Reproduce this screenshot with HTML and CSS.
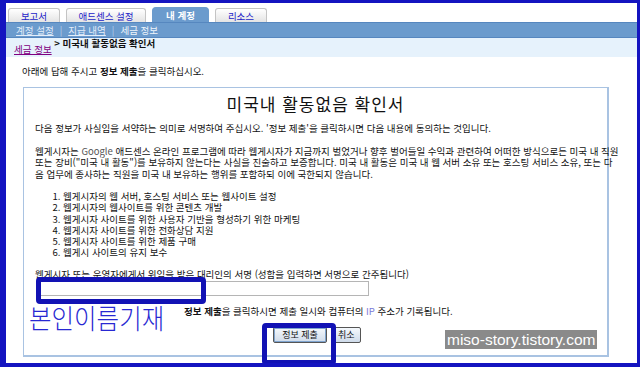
FILE: index.html
```html
<!DOCTYPE html>
<html lang="ko">
<head>
    <meta charset="UTF-8">
    <title>미국내 활동없음 확인서</title>
    <link rel="stylesheet" href="styles.css">
</head>
<body>
<div class="frame">
    <div class="tabs">
        <a class="tab tab-report" href="#">보고서</a>
        <a class="tab tab-setting" href="#">애드센스 설정</a>
        <a class="tab tab-active" href="#">내 계정</a>
        <a class="tab tab-resource" href="#">리소스</a>
    </div>
    <div class="subnav">
        <a href="#">계정 설정</a><span class="sep">|</span><a href="#">지급 내역</a><span class="sep">|</span><span class="current">세금 정보</span>
    </div>
    <div class="crumb">
        <a href="#">세금 정보</a> &gt; 미국내 활동없음 확인서
    </div>
    <p class="intro">아래에 답해 주시고 <b>정보 제출</b>을 클릭하십시오.</p>

    <div class="panel">
        <h1>미국내 활동없음 확인서</h1>
        <p>다음 정보가 사실임을 서약하는 의미로 서명하여 주십시오. '정보 제출'을 클릭하시면 다음 내용에 동의하는 것입니다.</p>
        <p>웹게시자는 <span class="google">Google</span> 애드센스 온라인 프로그램에 따라 웹게시자가 지금까지 벌었거나 향후 벌어들일 수익과 관련하여 어떠한 방식으로든 미국 내 직원<br>또는 장비("미국 내 활동")를 보유하지 않는다는 사실을 진술하고 보증합니다. 미국 내 활동은 미국 내 웹 서버 소유 또는 호스팅 서비스 소유, 또는 다<br>음 업무에 종사하는 직원을 미국 내 보유하는 행위를 포함하되 이에 국한되지 않습니다.</p>
        <ol>
            <li>웹게시자의 웹 서버, 호스팅 서비스 또는 웹사이트 설정</li>
            <li>웹게시자의 웹사이트를 위한 콘텐츠 개발</li>
            <li>웹게시자 사이트를 위한 사용자 기반을 형성하기 위한 마케팅</li>
            <li>웹게시자 사이트를 위한 전화상담 지원</li>
            <li>웹게시자 사이트를 위한 제품 구매</li>
            <li>웹게시 사이트의 유지 보수</li>
        </ol>
        <label class="sign-label" for="sign">웹게시자 또는 운영자에게서 위임을 받은 대리인의 서명 (성함을 입력하면 서명으로 간주됩니다)</label>
        <input class="sign-input" type="text" id="sign">
        <p class="note"><b>정보 제출</b>을 클릭하시면 제출 일시와 컴퓨터의 <span class="ip">IP</span> 주소가 기록됩니다.</p>
        <div class="buttons">
            <button class="btn btn-submit">정보 제출</button>
            <button class="btn">취소</button>
        </div>
    </div>

    <div class="mark mark-name"></div>
    <div class="mark-text">본인이름기재</div>
    <div class="mark mark-btn"></div>
    <div class="watermark">miso-story.tistory.com</div>
</div>
</body>
</html>
```
FILE: styles.css
```css
body {
    margin: 0;
    background: #fff;
    font-family: "Noto Sans CJK KR", "Liberation Sans", sans-serif;
    font-size: 9.5px;
    line-height: 11.5px;
    color: #111;
}

.frame {
    position: relative;
    height: 367px;
    box-sizing: border-box;
    border-style: solid;
    border-color: #1414c0;
    border-width: 3px 3px 4px 6px;
    overflow: hidden;
}

/* tabs */
.tabs {
    display: flex;
    align-items: flex-end;
    gap: 6px;
    height: 19px;
    padding-left: 2px;
}
.tab {
    display: flex;
    align-items: center;
    justify-content: center;
    height: 14px;
    box-sizing: border-box;
    background: linear-gradient(#ffffff, #e4e4e4);
    border: 1px solid #c4c4c4;
    border-bottom: none;
    border-radius: 3px 3px 0 0;
    color: #1c1cc8;
    text-decoration: none;
    line-height: 12px;
}
.tab-report { width: 52px; }
.tab-setting { width: 80px; }
.tab-resource { width: 52px; }
.tab-active {
    width: 57px;
    height: 15px;
    background: #6b9bcd;
    border-color: #6b9bcd;
    border-radius: 4px 4px 0 0;
    color: #fff;
    font-weight: bold;
}

/* sub navigation */
.subnav {
    display: flex;
    align-items: center;
    height: 16px;
    box-sizing: border-box;
    padding-left: 10px;
    background: #6b9bcd;
    border-top: 1px solid #5687bf;
    border-bottom: 1px solid #5687bf;
    line-height: 12px;
}
.subnav a {
    color: #e4eefa;
}
.subnav .sep {
    color: #b8d0ea;
    margin: 0 6px;
}
.subnav .current {
    color: #eef4fb;
}

.crumb {
    display: flex;
    align-items: center;
    height: 19px;
    padding: 2px 0 0 8px;
    box-sizing: border-box;
    background: #e6f2fc;
    font-weight: bold;
    line-height: 12px;
    white-space: pre;
}
.crumb a {
    color: #800080;
    font-weight: normal;
}

.intro {
    margin: 8px 0 10px 16px;
    line-height: 12px;
}

/* form panel */
.panel {
    width: 586px;
    height: 270px;
    box-sizing: border-box;
    margin-left: 17px;
    padding: 0 11px;
    border: 1px solid #a9c3e2;
    border-right-width: 2px;
    border-bottom-width: 2px;
}
.panel h1 {
    margin: 6px 0 9px;
    text-align: center;
    font-size: 17px;
    font-weight: normal;
    line-height: 20px;
    letter-spacing: 1px;
}
.panel p {
    margin: 0 0 11px;
    white-space: nowrap;
}
.google {
    color: #555;
}
.panel ol {
    margin: 0 0 10px;
    padding-left: 28px;
    line-height: 11.3px;
}
.sign-label {
    display: block;
}
.sign-input {
    display: block;
    margin: 1px 0 0 3px;
    width: 331px;
    height: 15px;
    box-sizing: border-box;
    border: 1px solid #b5b5b5;
    padding: 0;
}
.note {
    margin: 10px 0 0 149px !important;
}
.ip {
    color: #7a7ad8;
}
.buttons {
    display: flex;
    gap: 5px;
    margin: 9px 0 0 238px;
}
.btn {
    height: 16px;
    padding: 0 5px;
    font-family: inherit;
    font-size: 9px;
    line-height: 12px;
    color: #111;
    background: linear-gradient(#f4f8fc, #cfdbea);
    border: 1px solid #555;
    border-radius: 2px;
}
.btn-submit {
    width: 54px;
    box-shadow: inset 0 0 0 1px #7fa4cf;
}

/* annotations drawn on top of the screenshot */
.mark {
    position: absolute;
    border: 5px solid #1212b4;
    border-radius: 4px;
    box-sizing: border-box;
}
.mark-name {
    left: 30px;
    top: 274px;
    width: 170px;
    height: 27px;
}
.mark-btn {
    left: 256px;
    top: 320px;
    width: 74px;
    height: 42px;
}
.mark-text {
    position: absolute;
    left: 23px;
    top: 300px;
    font-size: 24.5px;
    font-weight: 300;
    line-height: 30px;
    color: #2828d2;
    transform: scaleY(1.1);
}
.watermark {
    position: absolute;
    left: 439px;
    top: 327px;
    padding: 0 2px;
    background: #8a8a8a;
    color: #fff;
    font-family: "Liberation Sans", sans-serif;
    font-size: 15.5px;
    line-height: 19px;
}
```
